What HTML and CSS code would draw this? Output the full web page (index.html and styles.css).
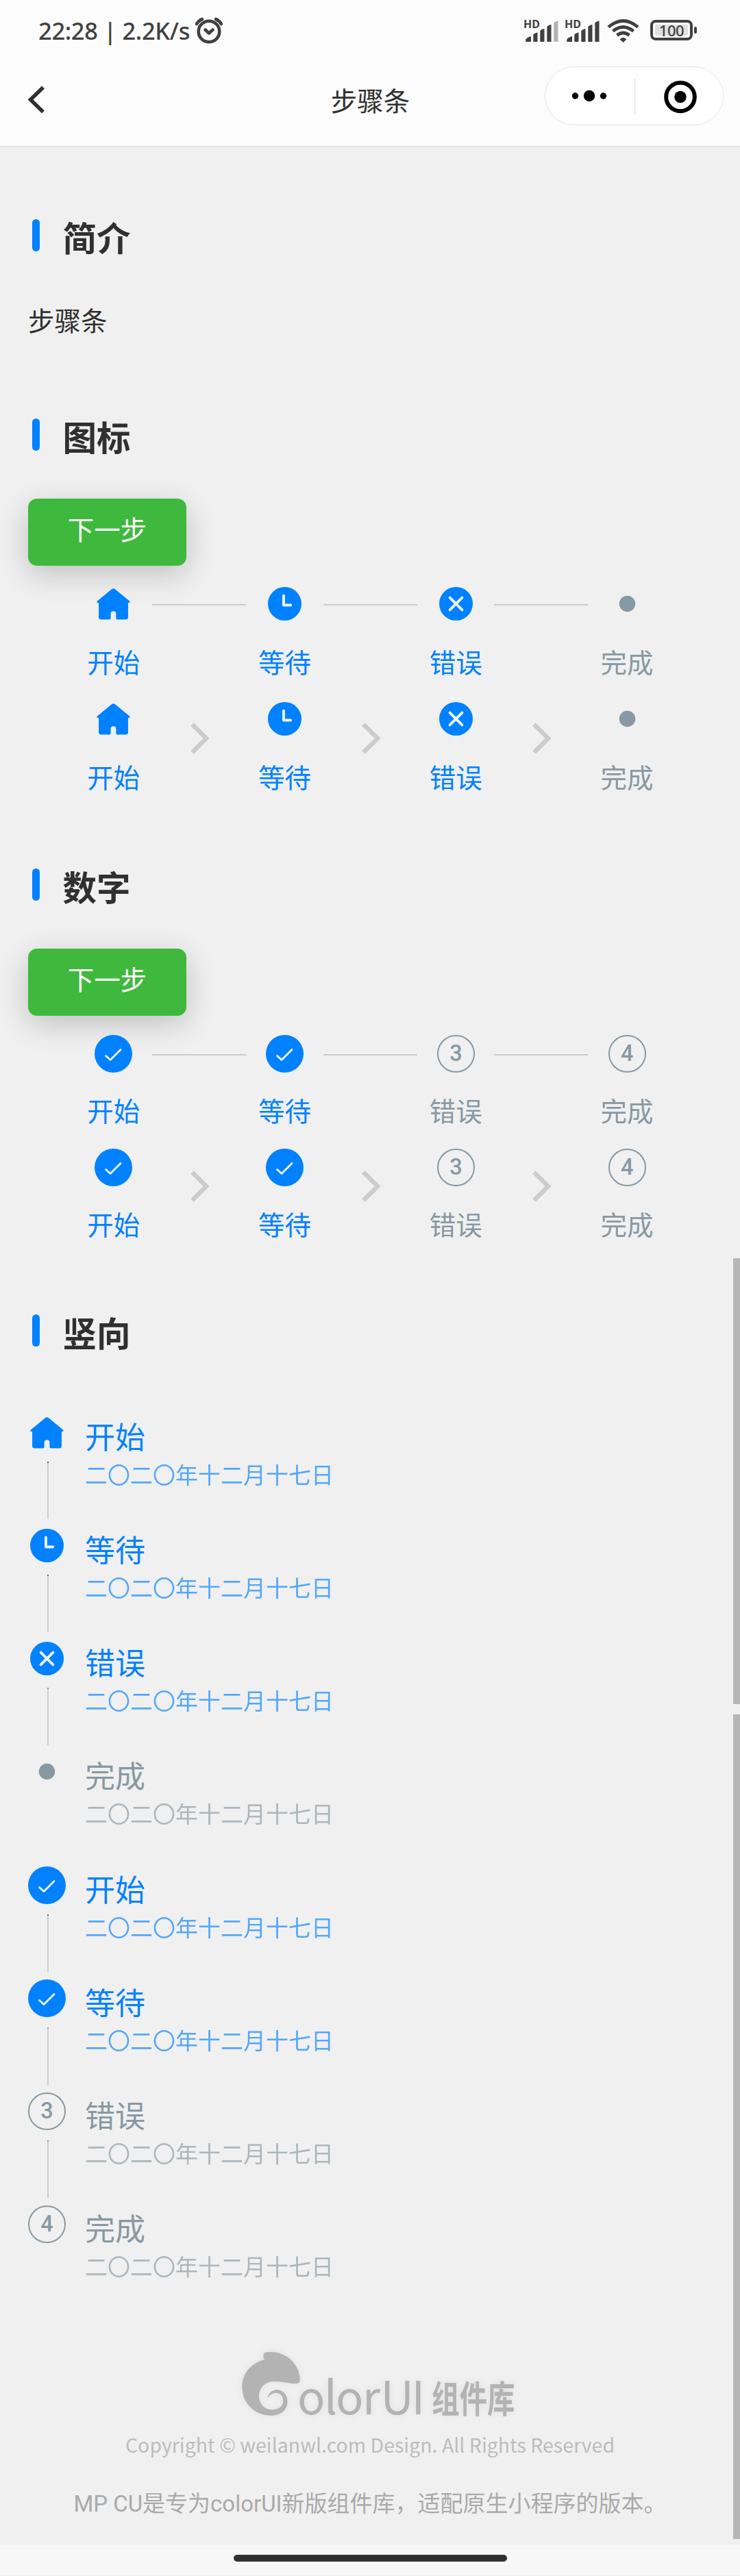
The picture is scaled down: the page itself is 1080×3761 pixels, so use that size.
FILE: index.html
```html
<!DOCTYPE html>
<html lang="zh-CN">
<head>
<meta charset="utf-8">
<title>步骤条</title>
<link rel="stylesheet" href="styles.css">
</head>
<body>
<svg class="sprite" aria-hidden="true">
  <symbol id="home" viewBox="0 0 48 48"><path d="M21.500 3.200Q24 1.200 26.500 3.200L47 20Q48.600 22 46.500 22.500H45V43Q45 46.500 41.500 46.500H29.500Q27.800 46.500 27.800 44.800V38Q27.800 34.500 24 34.500T20.200 38V44.800Q20.200 46.500 18.500 46.500H6.500Q3 46.500 3 43V22.500H1.500Q-.600 22 1 20Z"/></symbol>
  <symbol id="clock" viewBox="0 0 48 48"><circle cx="24" cy="24" r="24"/><path class="mark" d="M22.500 12.500V26H32.500"/></symbol>
  <symbol id="cross" viewBox="0 0 48 48"><circle cx="24" cy="24" r="24"/><path class="mark" d="M15.300 15.300L32.700 32.700M32.700 15.300L15.300 32.700"/></symbol>
  <symbol id="dot" viewBox="0 0 48 48"><circle cx="24" cy="24" r="11.500"/></symbol>
  <symbol id="check" viewBox="0 0 55 55"><circle cx="27.500" cy="27.500" r="27.500"/><path class="mark thin" d="M16.500 30.500L23 36.500L38 21.500"/></symbol>
  <symbol id="arrow" viewBox="0 0 28 46"><path d="M2.500 2.500L23 23L2.500 43.500"/></symbol>
  <symbol id="signal" viewBox="0 0 50 34"><path d="M2.300 33V30Q3 27 10 25V33ZM13.300 33V23Q14 20.500 19.500 19.500V33ZM23.300 33V17.500Q24 15 29.500 14V33ZM33.300 33V11.500Q34 9 39.500 8V33Z"/><path class="last-bar" d="M43.300 33V6Q44 3.500 49.500 2.500V33Z"/></symbol>
</svg>

<header class="header">
  <div class="status">
    <span class="status-text">22:28 | 2.2K/s</span>
    <svg class="alarm" width="40" height="38" viewBox="0 0 40 38"><circle cx="20" cy="21" r="15.300"/><path d="M14.500 18.500L20 23.500L25.500 18.500M2 10Q5 5 10 3M38 10Q35 5 30 3"/></svg>
    <div class="status-icons">
      <div class="signal weak"><span>HD</span><svg width="50" height="34"><use href="#signal"/></svg></div>
      <div class="signal"><span>HD</span><svg width="50" height="34"><use href="#signal"/></svg></div>
      <svg class="wifi" width="47" height="36" viewBox="0 0 47 36"><path d="M2 12.500Q23.500-5.500 45 12.500M8.500 18.500Q23.500 6.500 38.500 18.500M14.500 24.500Q23.500 17.500 32.500 24.500"/><path class="tip" d="M23.500 35L18.500 30.500Q23.500 25 28.500 30.500Z"/></svg>
      <div class="battery"><span>100</span></div>
    </div>
  </div>
  <nav class="nav">
    <svg class="back" width="25" height="41" viewBox="0 0 25 41"><path d="M22 2.500L3.500 20.500L22 38.500"/></svg>
    <h1 class="title">步骤条</h1>
    <div class="capsule">
      <svg width="130" height="50" viewBox="0 0 130 50"><circle cx="43.500" cy="25" r="4.700"/><circle cx="64" cy="25" r="8.200"/><circle cx="84.500" cy="25" r="4.700"/></svg>
      <svg class="target" width="129" height="51" viewBox="0 0 129 51"><circle class="ring" cx="66.500" cy="26.500" r="21"/><circle cx="66.500" cy="26.500" r="8.800"/></svg>
    </div>
  </nav>
</header>

<main class="page">
  <h2 class="heading"><span>简介</span></h2>
  <p class="intro">步骤条</p>

  <h2 class="heading"><span>图标</span></h2>
  <button class="next">下一步</button>
  <div class="steps lines">
    <div class="step on"><svg class="icon"><use href="#home"/></svg><span>开始</span></div>
    <div class="step on"><svg class="icon"><use href="#clock"/></svg><span>等待</span></div>
    <div class="step on"><svg class="icon"><use href="#cross"/></svg><span>错误</span></div>
    <div class="step"><svg class="icon"><use href="#dot"/></svg><span>完成</span></div>
  </div>
  <div class="steps">
    <div class="step on"><svg class="icon"><use href="#home"/></svg><span>开始</span></div>
    <div class="step on"><svg class="arrow"><use href="#arrow"/></svg><svg class="icon"><use href="#clock"/></svg><span>等待</span></div>
    <div class="step on"><svg class="arrow"><use href="#arrow"/></svg><svg class="icon"><use href="#cross"/></svg><span>错误</span></div>
    <div class="step"><svg class="arrow"><use href="#arrow"/></svg><svg class="icon"><use href="#dot"/></svg><span>完成</span></div>
  </div>

  <h2 class="heading number-heading"><span>数字</span></h2>
  <button class="next">下一步</button>
  <div class="steps numbers lines">
    <div class="step on"><svg class="icon"><use href="#check"/></svg><span>开始</span></div>
    <div class="step on"><svg class="icon"><use href="#check"/></svg><span>等待</span></div>
    <div class="step"><b class="num">3</b><span>错误</span></div>
    <div class="step"><b class="num">4</b><span>完成</span></div>
  </div>
  <div class="steps numbers">
    <div class="step on"><svg class="icon"><use href="#check"/></svg><span>开始</span></div>
    <div class="step on"><svg class="arrow"><use href="#arrow"/></svg><svg class="icon"><use href="#check"/></svg><span>等待</span></div>
    <div class="step"><svg class="arrow"><use href="#arrow"/></svg><b class="num">3</b><span>错误</span></div>
    <div class="step"><svg class="arrow"><use href="#arrow"/></svg><b class="num">4</b><span>完成</span></div>
  </div>

  <h2 class="heading vertical-heading"><span>竖向</span></h2>
  <ol class="timeline">
    <li class="event on"><div class="rail"><svg class="icon"><use href="#home"/></svg><i class="line on"></i></div><div><h3>开始</h3><p>二〇二〇年十二月十七日</p></div></li>
    <li class="event on"><div class="rail"><svg class="icon"><use href="#clock"/></svg><i class="line on"></i></div><div><h3>等待</h3><p>二〇二〇年十二月十七日</p></div></li>
    <li class="event on"><div class="rail"><svg class="icon"><use href="#cross"/></svg><i class="line"></i></div><div><h3>错误</h3><p>二〇二〇年十二月十七日</p></div></li>
    <li class="event"><div class="rail"><svg class="icon"><use href="#dot"/></svg></div><div><h3>完成</h3><p>二〇二〇年十二月十七日</p></div></li>
    <li class="event on"><div class="rail"><svg class="icon big"><use href="#check"/></svg><i class="line on"></i></div><div><h3>开始</h3><p>二〇二〇年十二月十七日</p></div></li>
    <li class="event on"><div class="rail"><svg class="icon big"><use href="#check"/></svg><i class="line"></i></div><div><h3>等待</h3><p>二〇二〇年十二月十七日</p></div></li>
    <li class="event"><div class="rail"><b class="num">3</b><i class="line"></i></div><div><h3>错误</h3><p>二〇二〇年十二月十七日</p></div></li>
    <li class="event"><div class="rail"><b class="num">4</b></div><div><h3>完成</h3><p>二〇二〇年十二月十七日</p></div></li>
  </ol>
</main>

<footer class="footer">
  <svg class="brand" width="410" height="110" viewBox="0 0 410 110">
    <path transform="translate(-246 -25) scale(.3333)" d="M855 115C850 103 870 102 890 102C960 104 1013 160 1014 225C1012 240 1000 241 985 240C960 238 935 231 895 231C858 233 834 262 834 297C836 333 860 355 893 355C920 354 938 340 940 318C941 295 925 279 905 281C890 283 880 293 871 304C875 283 890 268 912 267C940 268 959 290 959 320C958 355 930 380 887 380C815 380 760 325 760 255C760 195 800 150 860 135C853 130 851 122 855 115Z"/>
    <text class="latin" y="100" x="88 127 144 183 209.500 254.500">olorUI</text>
    <text class="han" transform="translate(284 98) scale(.75 1)" x="0" y="0">组件库</text>
  </svg>
  <p class="copyright">Copyright © weilanwl.com Design. All Rights Reserved</p>
  <p class="about">MP CU是专为colorUI新版组件库，适配原生小程序的版本。</p>
</footer>
<div class="gesture"><i></i></div>
<div class="scrollbar"><i></i><i></i></div>
</body>
</html>
```
FILE: styles.css
```css
* { box-sizing: border-box; margin: 0; padding: 0; }
body {
  position: relative;
  width: 1080px;
  height: 3761px;
  background: #f0f0f0;
  color: #303030;
  font-family: "Noto Sans CJK SC", sans-serif;
  font-size: 38.5px;
}
svg { display: block; overflow: visible; }
.sprite { position: absolute; width: 0; height: 0; }

/* header */
.header { height: 214px; background: #fcfcfc; border-bottom: 1px solid #dcdcdc; }
.status { display: flex; align-items: center; height: 90px; padding: 0 63px 0 56px; color: #404040; }
.status-text { width: 229px; font: 500 34.5px/48px "Noto Sans", sans-serif; letter-spacing: -.35px; white-space: nowrap; }
.alarm { margin-bottom: 2px; fill: none; stroke: #404040; stroke-width: 4.6; stroke-linecap: round; stroke-linejoin: round; }
.status-icons { display: flex; align-items: center; margin-left: auto; }
.signal { display: flex; width: 60px; height: 34px; position: relative; left: 1px; fill: #404040; }
.signal span { position: absolute; left: -1px; top: 0; font: bold 16px/14px "Noto Sans", sans-serif; }
.weak svg { --last: #b4b4b4; }
.last-bar { fill: var(--last, #404040); }
.wifi { margin: 0 16px 0 2px; fill: none; stroke: #404040; stroke-width: 4.8; }
.wifi .tip { fill: #404040; stroke: none; }
.battery { position: relative; width: 62px; height: 30px; margin: 0 6px 2px 0; padding: 3px; border: 4px solid #404040; border-radius: 8px; }
.battery span { display: block; height: 16px; background: #e0e0e0; border-radius: 3px; text-align: center; font: 500 22px/17px "Noto Sans", sans-serif; letter-spacing: -.5px; }
.battery::after { content: ""; position: absolute; right: -10px; top: 6px; width: 4px; height: 10px; background: #404040; border-radius: 2px; }
.nav { display: grid; grid-template-columns: 1fr auto 1fr; align-items: center; height: 110px; padding: 0 24px 0 41px; }
.back { fill: none; stroke: #303030; stroke-width: 5.5; }
.title { padding-right: 16px; font-size: 38.5px; font-weight: 400; line-height: 56px; }
.capsule { display: flex; align-items: center; justify-self: end; width: 261px; height: 86px; margin-bottom: 10px; border: 1px solid #e5e5e5; border-radius: 43px; background: #fff; }
.target { border-left: 1px solid #dcdcdc; }
.ring { fill: none; stroke: #000; stroke-width: 6; }

/* sections */
.page { padding: 106px 40px 0 41px; }
.heading { display: flex; align-items: center; gap: 33.500px; height: 47px; padding-left: 5.500px; font-size: 49.5px; font-weight: 700; line-height: 47px; }
.heading::before { content: ""; width: 11.500px; height: 47px; border-radius: 6px; background: #0081ff; }
.heading span { padding-top: 4px; }
.intro { margin: 69px 0 115px; line-height: 60px; }
.next { display: block; width: 231px; height: 98px; margin-top: 70px; padding-bottom: 12px; border: 0; border-radius: 13px; background: #3fb93d; color: #fff; font: inherit; line-height: 86px; box-shadow: 0 12px 44px rgba(0, 0, 0, .2); }
.number-heading { margin-top: 106px; }
.vertical-heading { margin-top: 104px; }

/* horizontal steps */
.steps { display: grid; grid-template-columns: repeat(4, 1fr); height: 168px; }
.step { position: relative; display: flex; flex-direction: column; align-items: center; gap: 32px; padding-top: 31px; color: #8799a3; line-height: 54px; }
.on { color: #0081ff; }
.icon { flex: none; width: 49px; height: 49px; fill: currentColor; }
.mark { fill: none; stroke: #f0f8ff; stroke-width: 3.8; stroke-linecap: round; stroke-linejoin: round; }
.thin { stroke-width: 2.8; }
.numbers { height: 166px; }
.numbers .step { gap: 27px; padding-top: 28px; }
.numbers .icon, .big { width: 55px; height: 55px; }
.num { flex: none; width: 55px; height: 55px; border: 2px solid #8799a3; border-radius: 50%; text-align: center; font: 500 32.5px/51px Roboto, sans-serif; }
.lines .step + .step::before { content: ""; position: absolute; left: -69px; top: 56px; width: 137px; height: 2px; background: #ccc; }
.arrow { position: absolute; left: -13px; top: calc(50% - 23px); width: 28px; height: 46px; fill: none; stroke: #ccc; stroke-width: 6.5; }

/* vertical steps */
.timeline { margin-top: 98px; list-style: none; }
.event { display: flex; gap: 28px; height: 165.125px; color: #8799a3; }
.event.on { color: #0081ff; }
.rail { display: flex; flex-direction: column; align-items: center; width: 55px; }
.rail .icon:not(.big) { margin: 3px 0; }
.line { width: 2px; height: 84px; margin: 15px 0 0 3px; background: #ccc; border-top: 2px solid #8799a3; }
.line.on { border-top-color: #1676d2; }
.event h3 { padding-top: 4px; font-size: 44px; font-weight: 400; line-height: 56px; }
.event p { padding-top: 1px; font-size: 33px; line-height: 55px; opacity: .65; }

/* footer */
.footer { height: 331px; padding-top: 40px; text-align: center; color: #aaa; }
.brand { margin-left: 346px; fill: #b3b3b3; filter: drop-shadow(0 0 5px rgba(0, 0, 0, .07)); }
.latin { font-size: 67px; }
.han { font-size: 54px; font-weight: 700; }
.copyright { margin-top: 14px; font-size: 28.5px; line-height: 40px; color: #bdbdbd; }
.about { margin-top: 47px; font: 33px/40px Roboto, "Noto Sans CJK SC", sans-serif; white-space: nowrap; }
.gesture { height: 44px; padding-top: 14px; background: #f7f7f7; }
.gesture i { display: block; width: 399px; height: 10px; margin: 0 auto; border-radius: 5px; background: #303030; }
.scrollbar { position: absolute; right: 0; top: 1837px; display: flex; flex-direction: column; gap: 15px; width: 10px; height: 1870px; }
.scrollbar i { height: 651px; background: #b6b6b6; }
.scrollbar i + i { height: auto; flex: 1; }
```
